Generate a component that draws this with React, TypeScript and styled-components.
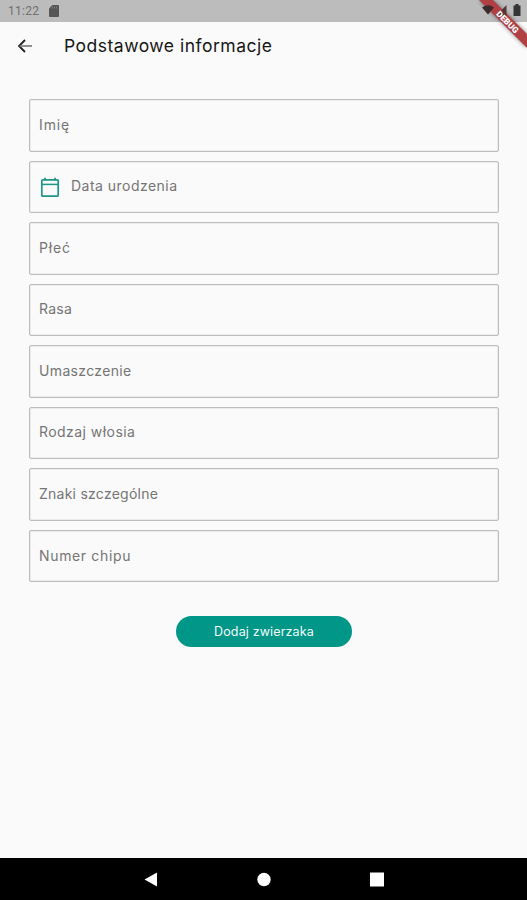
import React from "react";
import styled, { createGlobalStyle } from "styled-components";

const GlobalStyle = createGlobalStyle`
  * { box-sizing: border-box; }
  body { margin: 0; background: #fafafa; }
`;

const Screen = styled.div`
  position: relative;
  display: flex;
  flex-direction: column;
  width: 527px;
  height: 900px;
  overflow: hidden;
  background: #fafafa;
  font-family: "Inter", "Noto Sans", sans-serif;
`;

const StatusBar = styled.header`
  display: flex;
  align-items: center;
  flex: 0 0 21.5px;
  padding: 1px 6px 0 8px;
  background: #bcbcbc;
  color: #707070;
  font: 400 12px "Roboto", sans-serif;
  letter-spacing: 0.3px;
`;

const SdIcon = styled.svg`
  width: 10px;
  height: 12px;
  margin-left: 10px;
`;

const BatteryIcon = styled.svg`
  width: 8px;
  height: 13px;
  margin: -2px 0 0 auto;
`;

const AppBar = styled.div`
  display: flex;
  align-items: center;
  flex: 0 0 49px;
  padding-left: 17px;
`;

const BackIcon = styled.svg`
  width: 16px;
  height: 14px;
  margin-right: 31px;
`;

const Title = styled.h1`
  margin: 0;
  color: #161616;
  font-size: 17.5px;
  font-weight: 400;
  line-height: 22px;
  letter-spacing: 0.5px;
`;

const Form = styled.form`
  display: flex;
  flex-direction: column;
  align-items: center;
  flex: 1;
  padding: 28.5px 28px 0 29px;
`;

const Fields = styled.div`
  display: flex;
  flex-direction: column;
  gap: 9.07px;
  width: 100%;
`;

const Field = styled.div`
  display: flex;
  align-items: center;
  height: 52.5px;
  padding: 0 9px 1.2px;
  border: 1px solid #bdbdbd;
  border-radius: 2px;
  box-shadow: inset 0 0 0 0.5px #dedede;
`;

const CalendarIcon = styled.svg`
  width: 20px;
  height: 21px;
  margin: 2px 11px 0 1px;
`;

const Label = styled.span<{ $tracking: number }>`
  color: #757575;
  font-size: 14px;
  line-height: 20px;
  letter-spacing: ${({ $tracking }) => $tracking}px;
`;

const SubmitButton = styled.button`
  width: 176px;
  height: 31px;
  margin-top: 34px;
  padding: 0;
  border: 0;
  border-radius: 16px;
  background: #009688;
  color: #f2fbfa;
  font: 400 12.5px "Inter", sans-serif;
  letter-spacing: 0.15px;
`;

const NavBar = styled.nav`
  display: flex;
  align-items: center;
  flex: 0 0 42px;
  padding: 1px 143px 0 144px;
  justify-content: space-between;
  background: #000;
`;

const NavIcon = styled.svg`
  width: 14px;
  height: 15px;
`;

const DebugBanner = styled.svg`
  position: absolute;
  top: 0;
  right: 0;
  width: 60px;
  height: 60px;
`;

const fields = [
  { label: "Imię", tracking: 0.9 },
  { label: "Data urodzenia", tracking: 0.47, calendar: true },
  { label: "Płeć", tracking: 0.8 },
  { label: "Rasa", tracking: 0.25 },
  { label: "Umaszczenie", tracking: 0.35 },
  { label: "Rodzaj włosia", tracking: 0.45 },
  { label: "Znaki szczególne", tracking: 0.25 },
  { label: "Numer chipu", tracking: 0.65 },
];

export default function App() {
  return (
    <Screen>
      <GlobalStyle />
      <StatusBar>
        <span>11:22</span>
        <SdIcon viewBox="0 0 10 12">
          <path d="M3.4 0H9q1 0 1 1v10q0 1-1 1H1q-1 0-1-1V3.5z" fill="#555" />
          <path d="M3.5 1.5v2M5.5 1.5v2M7.5 1.5v2" stroke="#858585" strokeWidth=".8" />
        </SdIcon>
        <BatteryIcon viewBox="0 0 8 13">
          <path d="M.5 1.5h2V0h3v1.5h2V12h-7z" fill="#353535" />
        </BatteryIcon>
      </StatusBar>
      <AppBar>
        <BackIcon viewBox="0 0 16 14" fill="none" stroke="#222" strokeWidth="1.8">
          <path d="M8 1 2 7l6 6" />
          <path d="M2.5 7H15" stroke="#777" strokeWidth="1.6" />
        </BackIcon>
        <Title>Podstawowe informacje</Title>
      </AppBar>
      <Form>
        <Fields>
          {fields.map(({ label, tracking, calendar }) => (
            <Field key={label}>
              {calendar && (
                <CalendarIcon viewBox="0 0 20 21" fill="none" stroke="#209585">
                  <rect x="1.8" y="2.8" width="16.4" height="16.4" rx="1" strokeWidth="1.7" />
                  <path d="M2 7.4h16" strokeWidth="1.5" />
                  <path d="M5 .8v2.4M15 .8v2.4" strokeWidth="1.8" />
                </CalendarIcon>
              )}
              <Label $tracking={tracking}>{label}</Label>
            </Field>
          ))}
        </Fields>
        <SubmitButton type="button">Dodaj zwierzaka</SubmitButton>
      </Form>
      <NavBar>
        <NavIcon viewBox="0 0 14 15"><path d="M13 .5v14L.5 7.5z" fill="#fff" /></NavIcon>
        <NavIcon viewBox="0 0 14 15"><circle cx="7" cy="7.5" r="6.7" fill="#fff" /></NavIcon>
        <NavIcon viewBox="0 0 14 15"><path d="M0 .5h14v14H0z" fill="#fff" /></NavIcon>
      </NavBar>
      <DebugBanner viewBox="0 0 60 60">
        <defs>
          <filter id="bannerShadow" x="-20%" y="-20%" width="140%" height="140%">
            <feGaussianBlur stdDeviation="2" />
          </filter>
        </defs>
        <path d="M12 0h14l34 34v14z" fill="#000" opacity=".45" filter="url(#bannerShadow)" />
        <path d="M12 0h14l34 34v14z" fill="#b04044" />
        <path d="M15 7.5Q21 3 27 7.5l-6 7z" fill="#3b2b2b" />
        <path d="M39.5 5v11H29z" fill="#553536" />
        <text
          transform="translate(40.5 22) rotate(45)"
          y="3"
          textAnchor="middle"
          fill="#fff"
          fontFamily="Roboto, sans-serif"
          fontSize="8.5"
          fontWeight="900"
        >
          DEBUG
        </text>
      </DebugBanner>
    </Screen>
  );
}
